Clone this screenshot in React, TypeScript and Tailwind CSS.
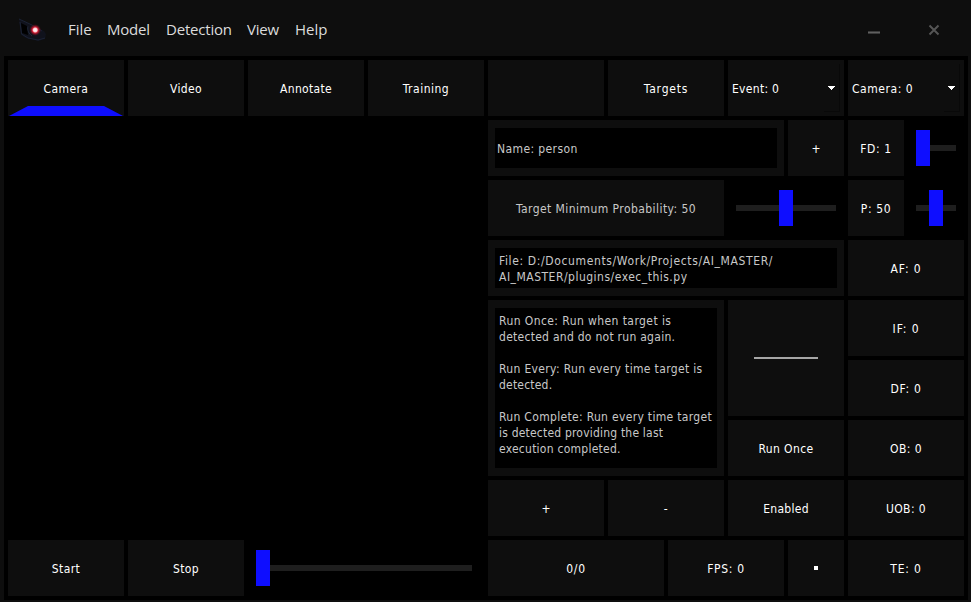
import type { ReactNode } from "react";

function Cell({ className = "", children }: { className?: string; children?: ReactNode }) {
  return <div className={`flex items-center justify-center bg-[#0e0e0e] ${className}`}>{children}</div>;
}

function Label({ children, className = "tracking-[0.4px]", color = "text-white" }: { children: ReactNode; className?: string; color?: string }) {
  return <span className={`mt-0.5 whitespace-pre ${color} ${className}`}>{children}</span>;
}

function Line({ children, className }: { children?: ReactNode; className: string }) {
  return <p className={`h-4 whitespace-pre text-[#c8c8c8] ${className}`}>{children}</p>;
}

function Slider({ className, before, after }: { className: string; before: string; after: string }) {
  return (
    <div className={`flex items-center pl-2 ${className}`}>
      <div className={`h-1.5 bg-[#1e1e1e] ${before}`} />
      <div className="h-9 w-3.5 shrink-0 bg-[#0e0eff]" />
      <div className={`h-1.5 bg-[#1e1e1e] ${after}`} />
    </div>
  );
}

function Combo({ text, className }: { text: string; className: string }) {
  return (
    <div className="col-span-2 flex items-center justify-between bg-[#0e0e0e] pl-1 pr-1">
      <Label className={className}>{text}</Label>
      <div className="flex h-12 w-4 items-center justify-center border-r border-b border-[#090909]">
        <svg width="7" height="4" viewBox="0 0 7 4" className="fill-white" shapeRendering="crispEdges">
          <path d="M0 0h7v1H6v1H5v1H4v1H3V3H2V2H1V1H0z" />
        </svg>
      </div>
    </div>
  );
}

export default function App() {
  return (
    <div className="flex h-[602px] w-[971px] flex-col bg-[#0e0e0e] font-['DejaVu_Sans_Condensed','DejaVu_Sans',sans-serif] text-xs leading-4">
      <header className="flex h-14 items-center pr-[31px] pl-[18px]">
        <svg width="30" height="26" viewBox="0 0 30 26" className="mt-1">
          <defs>
            <radialGradient id="glow">
              <stop offset="0" stopColor="#ffffff" />
              <stop offset=".32" stopColor="#ffd0d8" />
              <stop offset=".5" stopColor="#d41c34" />
              <stop offset="1" stopColor="#5a0818" stopOpacity="0" />
            </radialGradient>
          </defs>
          <path d="M1 2 14 8 26 14 28 17 27 22 20 24 8 21 3 18z" fill="#10121c" />
          <path d="M3 6 9 9 10 18 4 16z" fill="#000" />
          <path d="M1 2 14 8 24 14M2 5 3.5 17 10 21 20 23 27 21" fill="none" stroke="#1b2234" />
          <path d="M10 9.5C9 13 11 17 14 19" fill="none" stroke="#20283a" />
          <circle cx="17.2" cy="13" r="6" fill="url(#glow)" />
        </svg>
        <nav className="mt-0.5 ml-5 flex font-['Open_Sans',sans-serif] text-[15px] leading-5 text-[#dcdcdc]">
          <span className="w-[39px]">File</span>
          <span className="w-[59px] tracking-[-0.2px]">Model</span>
          <span className="w-[81px] tracking-[-0.2px]">Detection</span>
          <span className="w-12 tracking-[-0.2px]">View</span>
          <span>Help</span>
        </nav>
        <div className="mt-1 ml-auto flex items-center gap-12">
          <div className="mt-1 h-[3px] w-3 border-y border-[#3a3a3a] bg-[#606060]" />
          <svg width="12" height="12" viewBox="0 0 12 12" className="stroke-[#555555]" strokeWidth="2">
            <path d="M1.5 1.5 10.5 10.5M10.5 1.5 1.5 10.5" />
          </svg>
        </div>
      </header>
      <main className="mr-[3px] ml-1 grid h-[544px] grid-cols-[repeat(16,56px)] grid-rows-[repeat(9,56px)] gap-1 bg-black p-1">
        <Cell className="relative col-span-2">
          <Label>Camera</Label>
          <svg className="absolute bottom-0 left-0" width="116" height="10" viewBox="0 0 116 10">
            <path d="M1 10 20 0H96L115 10z" fill="#0e0eff" />
          </svg>
        </Cell>
        <Cell className="col-span-2"><Label>Video</Label></Cell>
        <Cell className="col-span-2"><Label className="tracking-[0.3px]">Annotate</Label></Cell>
        <Cell className="col-span-2"><Label className="tracking-[0.5px]">Training</Label></Cell>
        <Cell className="col-span-2" />
        <Cell className="col-span-2"><Label className="tracking-[0.8px]">Targets</Label></Cell>
        <Combo text="Event: 0" className="tracking-[0.3px]" />
        <Combo text="Camera: 0" className="tracking-[0.55px]" />

        <div className="col-span-8 row-span-7" />
        <Cell className="col-span-5">
          <div className="flex h-10 w-[282px] items-center bg-black pl-0.5"><Label color="text-[#c8c8c8]">Name: person</Label></div>
        </Cell>
        <Cell><Label className="tracking-normal">+</Label></Cell>
        <Cell><Label className="tracking-[0.6px]">FD: 1</Label></Cell>
        <Slider className="col-span-1 pr-2" before="w-0" after="flex-1" />

        <Cell className="col-span-4"><Label color="text-[#c8c8c8]" className="tracking-[0.44px]">Target Minimum Probability: 50</Label></Cell>
        <Slider className="col-span-2 pr-2" before="w-[43px]" after="flex-1" />
        <Cell><Label className="tracking-[0.6px]">P: 50</Label></Cell>
        <Slider className="col-span-1 pr-2" before="w-[13px]" after="flex-1" />

        <Cell className="col-span-6">
          <div className="h-10 w-[342px] bg-black pt-[5px] pl-1">
            <Line className="tracking-[0.63px]">File: D:/Documents/Work/Projects/AI_MASTER/</Line>
            <Line className="tracking-[0.5px]">AI_MASTER/plugins/exec_this.py</Line>
          </div>
        </Cell>
        <Cell className="col-span-2"><Label className="tracking-[0.9px]">AF: 0</Label></Cell>

        <Cell className="col-span-4 row-span-3">
          <div className="h-40 w-[222px] bg-black pt-[5px] pl-1">
            <Line className="tracking-[0.42px]">Run Once: Run when target is</Line>
            <Line className="tracking-[0.27px]">detected and do not run again.</Line>
            <Line className="" />
            <Line className="tracking-[0.34px]">Run Every: Run every time target is</Line>
            <Line className="tracking-[0.2px]">detected.</Line>
            <Line className="" />
            <Line className="tracking-[0.32px]">Run Complete: Run every time target</Line>
            <Line className="tracking-[0.2px]">is detected providing the last</Line>
            <Line className="tracking-[0.25px]">execution completed.</Line>
          </div>
        </Cell>
        <Cell className="col-span-2 row-span-2"><div className="h-0.5 w-16 bg-[#a6a6a6]" /></Cell>
        <Cell className="col-span-2"><Label className="tracking-[0.9px]">IF: 0</Label></Cell>
        <Cell className="col-span-2"><Label className="tracking-[0.7px]">DF: 0</Label></Cell>
        <Cell className="col-span-2"><Label>Run Once</Label></Cell>
        <Cell className="col-span-2"><Label>OB: 0</Label></Cell>

        <Cell className="col-span-2"><Label className="tracking-normal">+</Label></Cell>
        <Cell className="col-span-2"><Label>-</Label></Cell>
        <Cell className="col-span-2"><Label className="tracking-[0.3px]">Enabled</Label></Cell>
        <Cell className="col-span-2"><Label>UOB: 0</Label></Cell>

        <Cell className="col-span-2"><Label>Start</Label></Cell>
        <Cell className="col-span-2"><Label>Stop</Label></Cell>
        <Slider className="col-span-4 pr-3" before="w-0" after="flex-1" />
        <Cell className="col-span-3"><Label className="tracking-[0.7px]">0/0</Label></Cell>
        <Cell className="col-span-2"><Label className="tracking-[0.7px]">FPS: 0</Label></Cell>
        <Cell><div className="size-1 bg-white" /></Cell>
        <Cell className="col-span-2"><Label className="tracking-[0.8px]">TE: 0</Label></Cell>
      </main>
    </div>
  );
}
